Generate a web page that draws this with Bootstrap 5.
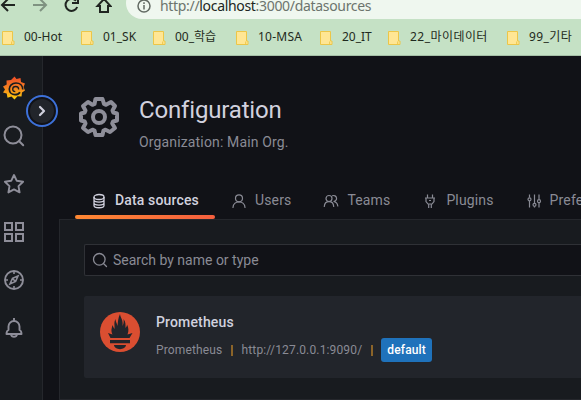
<!DOCTYPE html>
<html lang="en" data-bs-theme="dark">
<head>
<meta charset="utf-8">
<title>Configuration: Data sources</title>
<link href="https://cdn.jsdelivr.net/npm/bootstrap@5.3.0/dist/css/bootstrap.min.css" rel="stylesheet">
<style>
body{width:581px;height:400px;background:#111217;font-family:Roboto,sans-serif;font-size:14px;line-height:22px;letter-spacing:.15px;color:#ccccdc}
.chrome{background:#c5e1c5;height:56px;border-bottom:1px solid #a5bfa6;font-family:"Noto Sans","Noto Sans CJK KR",sans-serif;letter-spacing:0}
.tools{height:19px}
.tools>svg{margin-top:-4px}
.omni{margin-left:14px;height:32px;margin-top:-13px;border-radius:16px 0 0 16px;background:#eff7ef;padding:5px 0 0 11px;font-size:14px;color:#6c746d;white-space:nowrap}
.omni span{margin-left:9px;line-height:22px;letter-spacing:-.32px}
.omni b{font-weight:400;color:#202521}
.marks{height:36px;padding-left:2px;font-size:12px;color:#1f2a20;white-space:nowrap}
.marks>div{flex:none}
.marks svg{margin-right:9px}
.w1{width:79px}.w2{width:72px}.w3{width:83px}.w4{width:84px;letter-spacing:.25px}.w5{width:68px}.w6{width:119px;letter-spacing:.45px}.w7{width:74px;letter-spacing:.4px}
.side{width:43px;background:#181b1f;border-right:1px solid #25272c;padding:20px 0 0 2px;gap:24px;color:#8e8e99}
.toggle{left:26px;top:39px;width:32px;height:32px;border:2px solid #3d71d9;background:#111217;padding:2px}
.toggle>span{width:24px;height:24px;background:#22252b}
.main-area{min-width:0}
.head{height:122px;padding:38px 0 0 34px;gap:18px}
.head h1{font-size:24px;line-height:32px;letter-spacing:-.17px;color:#d1d1de}
.head .org{margin-top:5px}
.muted{color:#8a8b95}
.tabs{height:41px;margin-left:32px;white-space:nowrap}
.tabs a{height:41px;padding:2px 16px 0;color:#8a8b95;text-decoration:none;gap:8px;flex:none}
.tabs a svg{margin-top:3px}
.tabs a.on{color:#d1d1de;font-weight:500}
.tabs a.on::after{content:"";position:absolute;left:0;right:0;bottom:0;height:4px;border-radius:2px;background:linear-gradient(90deg,#ff8833,#f55f3e)}
.panel{margin-left:16px;background:#181b1f;border:1px solid #25272c;border-right:0;padding:24px 0 0 24px}
.find{height:32px;background:#111217;border:1px solid #2f3136;border-right:0;border-radius:2px 0 0 2px;padding-left:7px;gap:5px;letter-spacing:0}
.source{height:82px;margin-top:20px;background:#22252b;border-radius:2px 0 0 2px;padding:16px;gap:16px}
.source h2{font-size:14px;line-height:20px;font-weight:500;color:#d1d1de}
.meta{font-size:12px;line-height:24px;margin-top:6px;white-space:nowrap}
.meta i{width:2px;height:11px;background:#8b6429;margin:0 8px 0 9px}
.tag{background:#1f72bb;color:#fff;font-weight:500;border-radius:3px;padding:0 6px;height:24px}
</style>
<script src="https://cdn.jsdelivr.net/npm/bootstrap@5.3.0/dist/js/bootstrap.bundle.min.js"></script>
</head>
<body class="overflow-hidden d-flex flex-column">
<svg width="0" height="0" class="position-absolute">
<defs>
<linearGradient id="flame" x1="0" y1="0" x2="0" y2="1"><stop offset="0" stop-color="#f04b28"/><stop offset=".5" stop-color="#f58220"/><stop offset="1" stop-color="#fdd10a"/></linearGradient>
<symbol id="folder" viewBox="0 0 13 14"><path d="M.5.5h10v9.500l1.500 0V13.500H.5z" fill="#ffe694" stroke="#ecc648"/><path d="M9.700 10.500v3" stroke="#ecc648"/></symbol>
</defs>
</svg>
<header class="chrome flex-shrink-0 overflow-hidden">
  <div class="tools d-flex align-items-start">
    <svg width="112" height="20" viewBox="0 -4 112 20" fill="none" stroke="#202521" stroke-width="2"><path d="M15 5H2M8-1 2 5l6 6"/><path d="M33 5h13M40-1l6 6-6 6" stroke="#7f9281"/><path d="M76 .8A6 6 0 1 0 77.200 7M78-3v6h-6"/><path d="M97.500 6h2.500v6h8V6h2.500L104-1z"/></svg>
    <div class="omni flex-fill d-flex align-items-center">
      <svg width="14" height="14" viewBox="0 0 14 14" fill="none" stroke="#626a63" stroke-width="1.500"><circle cx="7" cy="7" r="6"/><path d="M7 6v4.500M7 3.300v1.600"/></svg>
      <span>http://<b>localhost</b>:3000/datasources</span>
    </div>
  </div>
  <div class="marks d-flex align-items-center">
    <div class="w1"><svg width="13" height="14"><use href="#folder"/></svg>00-Hot</div>
    <div class="w2"><svg width="13" height="14"><use href="#folder"/></svg>01_SK</div>
    <div class="w3"><svg width="13" height="14"><use href="#folder"/></svg>00_학습</div>
    <div class="w4"><svg width="13" height="14"><use href="#folder"/></svg>10-MSA</div>
    <div class="w5"><svg width="13" height="14"><use href="#folder"/></svg>20_IT</div>
    <div class="w6"><svg width="13" height="14"><use href="#folder"/></svg>22_마이데이터</div>
    <div class="w7"><svg width="13" height="14"><use href="#folder"/></svg>99_기타</div>
  </div>
</header>
<div class="d-flex flex-fill position-relative">
  <nav class="side d-flex flex-column flex-shrink-0">
    <svg width="24" height="24" viewBox="0 0 24 24"><path fill="url(#flame)" d="M9 4 12.500.500 14.500 3 18.500 2l.5 4 4 1.500-1.500 3.500 1.500 3.500-3 2-.5 4-4-.3-3 3.300-3-3-4 1.300-.8-4.200L1 16.500 3 13.500 1 10.500 4.700 8.500 4.500 4.500z"/><path d="M20.800 13.500C20.800 9 17.500 7 14 7 10 7 7.300 10 7.300 13c0 3.500 2.700 5.700 5.700 5.700 2 0 4-1 5-2.500" fill="none" stroke="#181b1f" stroke-width="1.700"/><path d="M16.700 13.500c0-1.800-1.200-3-3-3-1.700 0-3 1.300-3 2.800s1.200 2.400 2.600 2.400" fill="none" stroke="#181b1f" stroke-width="1.300"/></svg>
    <svg width="24" height="24" viewBox="0 0 24 24" fill="none" stroke="currentColor" stroke-width="2" stroke-linecap="round"><circle cx="11" cy="11" r="8.500"/><path d="m17.200 17.200 4 4"/></svg>
    <svg width="24" height="24" viewBox="0 0 24 24" fill="none" stroke="currentColor" stroke-width="1.900" stroke-linejoin="round"><path d="m12 3 2.800 5.800 6.300.9-4.600 4.400 1.100 6.300-5.600-3-5.600 3 1.100-6.300-4.600-4.400 6.300-.9z"/></svg>
    <svg width="24" height="24" viewBox="0 0 24 24" fill="none" stroke="currentColor" stroke-width="2"><path d="M3 3h7v7H3zM14 3h7v7h-7zM3 14h7v7H3zM14 14h7v7h-7z"/></svg>
    <svg width="24" height="24" viewBox="0 0 24 24" fill="none" stroke="currentColor" stroke-width="1.900"><circle cx="12" cy="12" r="9"/><path d="M12 3v3M12 18v3M3 12h3M18 12h3M16 8l-5.500 2.300L8 16l5.600-2.500zM11 11l2 2" stroke-width="1.600"/></svg>
    <svg width="24" height="24" viewBox="0 0 24 24" fill="none" stroke="currentColor" stroke-width="1.900" stroke-linejoin="round"><path d="M12 2v3M6.500 14v-3.500a5.500 5.500 0 0 1 11 0V14c1.500.7 2 1.500 2 4h-15c0-2.500.5-3.300 2-4zM9 18.500c.7 3 5.300 3 6 0"/></svg>
  </nav>
  <button class="toggle btn rounded-circle position-absolute"><span class="d-flex rounded-circle align-items-center justify-content-center"><svg width="8" height="12" viewBox="0 0 8 12" fill="none" stroke="#d1d1de" stroke-width="2.200" stroke-linecap="round" stroke-linejoin="round"><path d="m2 2 4 4-4 4"/></svg></span></button>
  <main class="main-area flex-fill d-flex flex-column overflow-hidden">
    <div class="head d-flex">
      <svg class="flex-shrink-0" width="44" height="46" viewBox="-22 -23 44 46" fill="none" stroke="#8e8e99" stroke-width="4" stroke-linejoin="round"><circle r="6"/><path d="M-3.500-18h7l1.500 5 2 .8L12-15l4 4-2.500 4.500.8 2L18-3.500v7l-4 1-.8 2L16 11l-5 4-4.500-2.300-2 .8-1 4.500h-7l-1-4.500-2-.8L-11 15l-5-4 2.500-4.500-.8-2-3.700-1v-7l3.700-1 .8-2L-16-11l5-4 4.500 2.800 2-.8z"/></svg>
      <div><h1 class="fw-normal m-0">Configuration</h1><div class="muted org">Organization: Main Org.</div></div>
    </div>
    <div class="tabs d-flex">
      <a class="on d-flex align-items-center position-relative" href="#"><svg width="16" height="16" viewBox="0 0 16 16" fill="none" stroke="currentColor" stroke-width="1.300"><ellipse cx="8" cy="4" rx="5" ry="2.500"/><path d="M3 4v8.500c0 3 10 3 10 0V4M3 7c0 2.700 10 2.700 10 0M3 10c0 2.700 10 2.700 10 0M5 8.700v.8M5 11.700v.8"/></svg>Data sources</a>
      <a class="d-flex align-items-center" href="#"><svg width="16" height="16" viewBox="0 0 16 16" fill="none" stroke="currentColor" stroke-width="1.200" stroke-linecap="round"><circle cx="8" cy="5.300" r="3.500"/><path d="M2 14.500c.5-7.500 11.500-7.500 12 0"/></svg>Users</a>
      <a class="d-flex align-items-center" href="#"><svg width="16" height="16" viewBox="0 0 16 16" fill="none" stroke="currentColor" stroke-width="1.200" stroke-linecap="round"><circle cx="6" cy="5.500" r="3"/><path d="M1.300 13.500c.4-6.500 9-6.500 9.400 0M9.500 2.700a3 3 0 1 1 1 5.800c2.300.3 4 2 4.300 4.500"/></svg>Teams</a>
      <a class="d-flex align-items-center" href="#"><svg width="16" height="16" viewBox="0 0 16 16" fill="none" stroke="currentColor" stroke-width="1.200"><path d="M5.500 1.500V5M10.500 1.500V5M3 5h10M4 5v3.500L6 11h4l2-2.500V5M6.700 11v4M9.300 11v4M7 7.500h2"/></svg>Plugins</a>
      <a class="d-flex align-items-center" href="#"><svg width="16" height="16" viewBox="0 0 16 16" fill="none" stroke="currentColor" stroke-width="1.200"><path d="M3.500 1.500v3M3.500 8v6.500M8.500 1.500V10M8.500 13.500v1M13 1.500v5M13 10v4.500"/><circle cx="3.500" cy="6.300" r="1.500"/><circle cx="8.500" cy="11.800" r="1.500"/><circle cx="13" cy="8.200" r="1.500"/></svg>Preferences</a>
    </div>
    <section class="panel flex-fill">
      <div class="find muted d-flex align-items-center"><svg width="16" height="16" viewBox="0 0 16 16" fill="none" stroke="currentColor" stroke-width="1.300" stroke-linecap="round"><circle cx="7.300" cy="7.300" r="5.800"/><path d="m11.700 11.700 2.800 2.800"/></svg>Search by name or type</div>
      <article class="source d-flex">
        <svg class="flex-shrink-0" width="40" height="40" viewBox="0 0 40 40"><circle cx="20" cy="20" r="20" fill="#da4e31"/><g fill="#22252b"><path d="M10.500 26 8 21l4.500 1.500C10.500 18 12 16 12.500 13c.7 2 1.500 3 2 4 .5-3-1-6 1-10 0 3 1.500 4 2 7 .5-4 .5-8 2.500-12 .5 4 3.500 6 2.500 12 1-2 1.500-4 1-7 2.500 3 2 6 2 9 .8-1 1.500-2 1.500-3.500 1.500 3 2 6 .5 10l5-1.500-3 5z"/><path d="M10 28h20v3.200H10zM14 33h12c-.5 5.500-11.500 5.500-12 0z"/></g></svg>
        <div>
          <h2 class="m-0">Prometheus</h2>
          <div class="meta muted d-flex align-items-center">Prometheus<i></i>http://127.0.0.1:9090/<i></i><span class="tag">default</span></div>
        </div>
      </article>
    </section>
  </main>
</div>
</body>
</html>
